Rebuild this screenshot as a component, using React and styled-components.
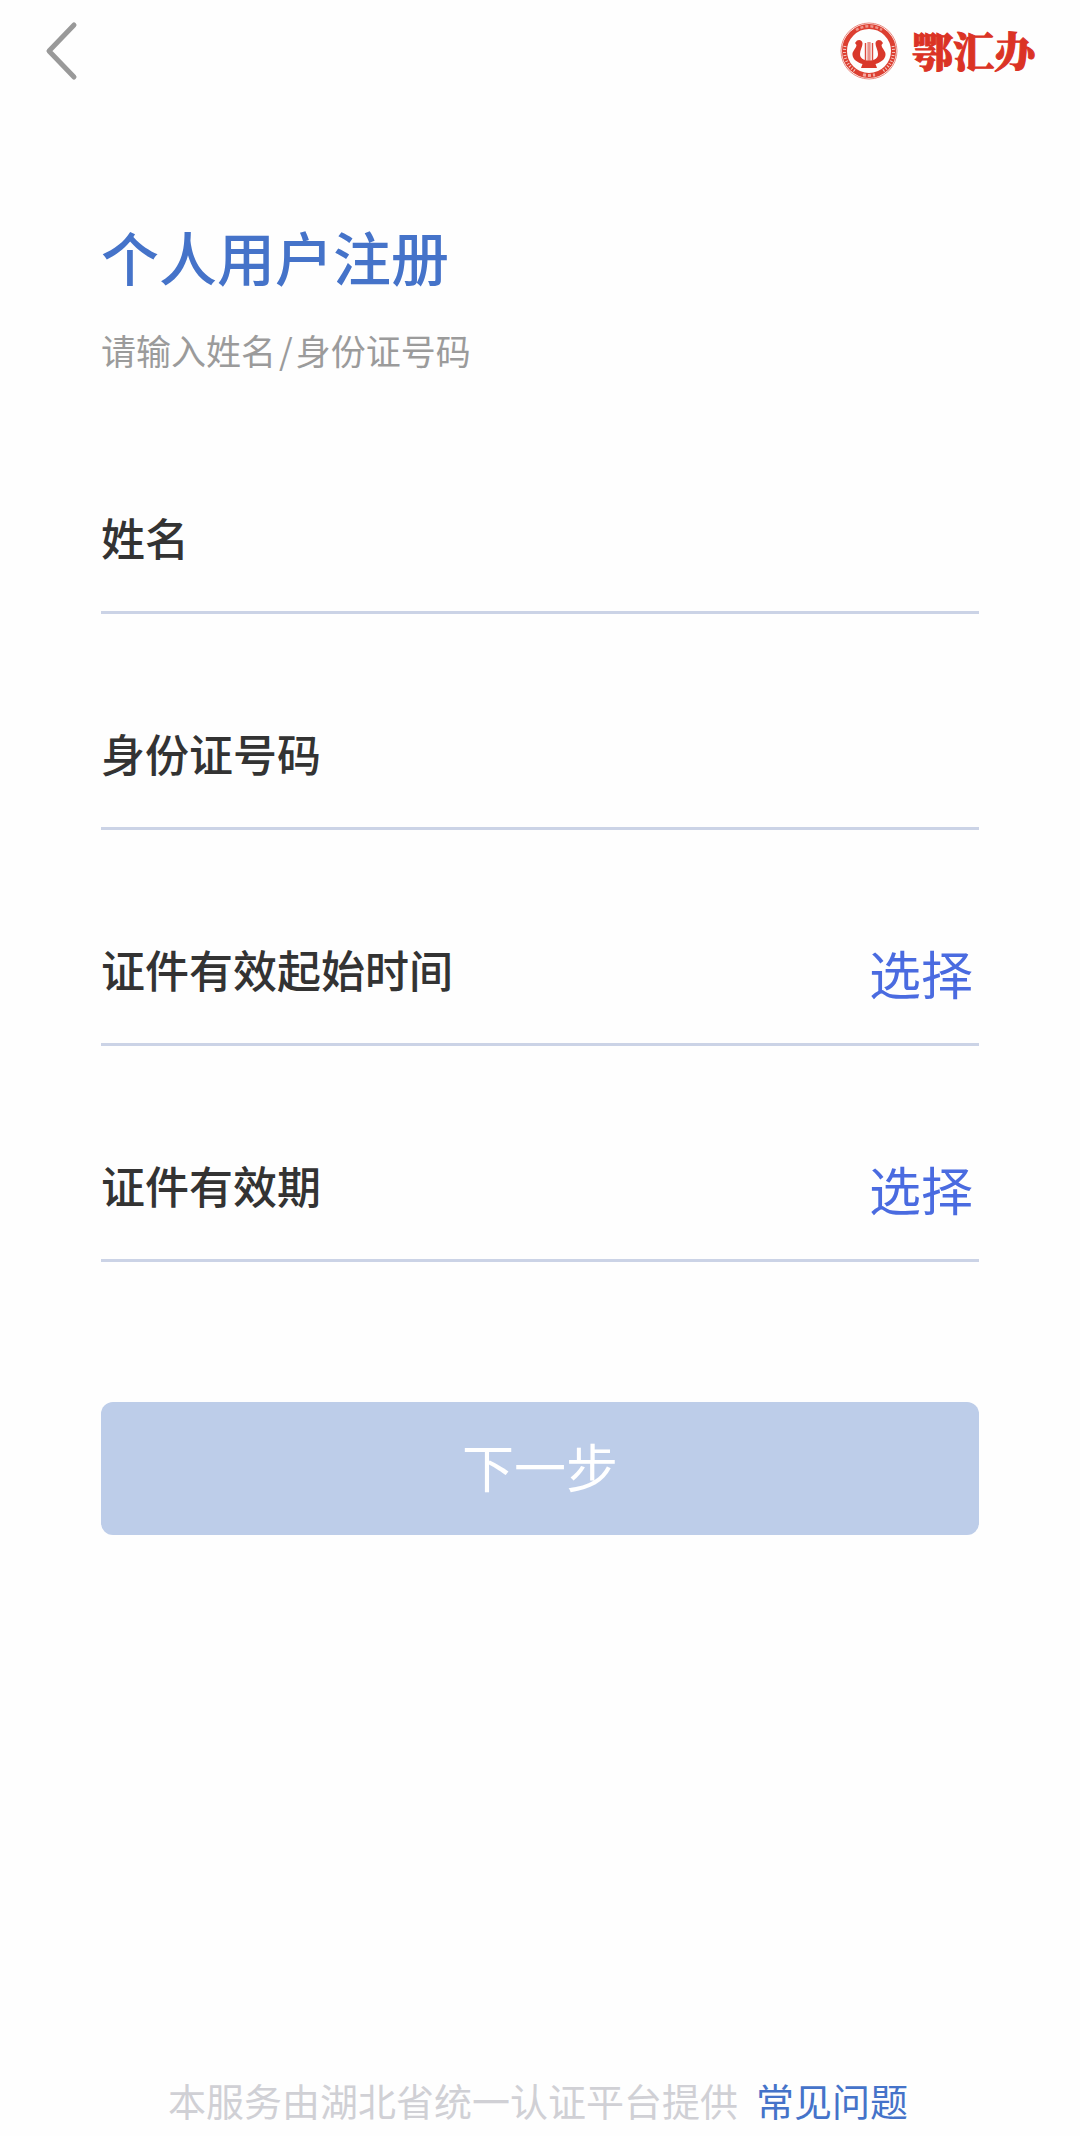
import React, { useState } from 'react';
import styled, { createGlobalStyle } from 'styled-components';

const GlobalStyle = createGlobalStyle`
  * {
    box-sizing: border-box;
  }

  body {
    margin: 0;
    background-color: #fefefe;
    font-family: "Noto Sans CJK SC", "Noto Sans", sans-serif;
  }

  button, input {
    font-family: inherit;
  }
`;

const Page = styled.div`
  display: flex;
  flex-direction: column;
  min-height: 100vh;
`;

const Header = styled.header`
  display: flex;
  justify-content: space-between;
  align-items: center;
  height: 102px;
  padding: 0 45px 0 44px;
`;

const BackButton = styled.button`
  display: flex;
  padding: 0;
  border: none;
  background: none;
  cursor: pointer;
`;

const Brand = styled.div`
  display: flex;
  align-items: center;
  gap: 14px;
`;

const BrandName = styled.span`
  padding-bottom: 2px;
  font-family: "Noto Serif CJK SC", "Noto Sans CJK SC", serif;
  font-size: 41px;
  font-weight: 900;
  line-height: 56px;
  color: #db3325;
  -webkit-text-stroke: 1px #db3325;
`;

const Main = styled.main`
  flex: 1;
  padding: 114px 101px 0;
`;

const Title = styled.h1`
  margin: 0;
  font-size: 58px;
  font-weight: 500;
  line-height: 80px;
  color: #4573c9;
`;

const Hint = styled.p`
  margin: 28px 0 0;
  font-size: 35px;
  line-height: 52px;
  color: #9b9b9b;
`;

const Slash = styled.span`
  margin: 0 3px;
`;

const Form = styled.form`
  margin-top: 22px;
`;

const Field = styled.div`
  display: flex;
  align-items: flex-end;
  gap: 24px;
  height: 216px;
  padding-bottom: 36px;
  border-bottom: 3px solid #cbd3e6;
`;

const Label = styled.label`
  flex: none;
  font-size: 44px;
  font-weight: 500;
  line-height: 76px;
  color: #333333;
`;

const Input = styled.input`
  flex: 1;
  min-width: 0;
  height: 76px;
  padding: 0;
  border: none;
  outline: none;
  background: none;
  font-size: 44px;
  color: #333333;
`;

const SelectButton = styled.button`
  margin-left: auto;
  padding: 0 6px;
  border: none;
  background: none;
  font-size: 52px;
  line-height: 68px;
  color: #4a6be0;
  cursor: pointer;
`;

const SubmitButton = styled.button`
  width: 100%;
  height: 133px;
  margin-top: 140px;
  padding: 0 0 6px;
  border: none;
  border-radius: 12px;
  background-color: #bdcde9;
  font-size: 52px;
  color: #ffffff;
`;

const Footer = styled.footer`
  display: flex;
  justify-content: center;
  gap: 18px;
  padding: 0 36px 8px 32px;
  font-size: 38px;
  line-height: 56px;
  color: #d0d0d5;
`;

const HelpLink = styled.a`
  color: #4573c9;
  text-decoration: none;
`;

const BackIcon = () => (
  <svg width="34" height="60" viewBox="0 0 34 60" fill="none" aria-hidden="true">
    <path
      d="M30 4 L5 30 L30 56"
      stroke="#999999"
      strokeWidth="5"
      strokeLinecap="round"
      strokeLinejoin="round"
    />
  </svg>
);

const Emblem = () => (
  <svg width="58" height="58" viewBox="0 0 58 58" fill="none" aria-hidden="true">
    <circle cx="29" cy="29" r="28" stroke="#eb8a80" strokeWidth="1" />
    <circle cx="29" cy="29" r="24.5" stroke="#dc3f31" strokeWidth="5" />
    {/* lettering dots and wheat ears on the ring */}
    <path d="M16 8 A24.5 24.5 0 0 1 42 8" stroke="#ef968c" strokeWidth="2.5" strokeDasharray="3 2" />
    <path d="M23 52.7 A24.5 24.5 0 0 0 35 52.7" stroke="#f3aaa2" strokeWidth="3" strokeDasharray="3 2" />
    <path d="M5 24 A24.5 24.5 0 0 0 15 49" stroke="#f8cfca" strokeWidth="3" strokeDasharray="1 2" />
    <path d="M53 24 A24.5 24.5 0 0 1 43 49" stroke="#f8cfca" strokeWidth="3" strokeDasharray="1 2" />
    {/* lyre */}
    <path
      d="M15 21 L17 18.5 C19.5 17 22.5 18.5 22.5 21.5 C22.5 25 20 28 20 32 C20 36 23 38.500 29 38.500 C35 38.500 38 36 38 32 C38 28 35.500 25 35.500 21.500 C35.500 18.500 38.500 17 41 18.500 L43 21 L41.500 23 C42 27 46 29 45.500 33 C45 38 40 40.500 35.500 42 L37 46 L21 46 L22.500 42 C18 40.500 13 38 12.500 33 C12 29 16 27 16.500 23 Z"
      fill="#d9382b"
    />
    <path d="M25.5 21 V39 M32.5 21 V39" stroke="#dc4b3f" strokeWidth="1.4" />
    <path d="M28.1 20 V39 M29.9 20 V39" stroke="#dc4b3f" strokeWidth="1" />
  </svg>
);

const fields = [
  { id: 'name', label: '姓名' },
  { id: 'idNumber', label: '身份证号码' },
  { id: 'validFrom', label: '证件有效起始时间', select: true },
  { id: 'validUntil', label: '证件有效期', select: true },
];

const App = () => {
  const [values, setValues] = useState({ name: '', idNumber: '' });

  const handleChange = (e) => {
    setValues({ ...values, [e.target.id]: e.target.value });
  };

  const handleSubmit = (e) => {
    e.preventDefault();
  };

  return (
    <Page>
      <GlobalStyle />
      <Header>
        <BackButton type="button" aria-label="返回">
          <BackIcon />
        </BackButton>
        <Brand>
          <Emblem />
          <BrandName>鄂汇办</BrandName>
        </Brand>
      </Header>
      <Main>
        <Title>个人用户注册</Title>
        <Hint>请输入姓名<Slash>/</Slash>身份证号码</Hint>
        <Form onSubmit={handleSubmit}>
          {fields.map(({ id, label, select }) => (
            <Field key={id}>
              <Label htmlFor={id}>{label}</Label>
              {select ? (
                <SelectButton type="button" id={id}>选择</SelectButton>
              ) : (
                <Input id={id} type="text" value={values[id]} onChange={handleChange} />
              )}
            </Field>
          ))}
          <SubmitButton type="submit">下一步</SubmitButton>
        </Form>
      </Main>
      <Footer>
        <span>本服务由湖北省统一认证平台提供</span>
        <HelpLink href="#faq">常见问题</HelpLink>
      </Footer>
    </Page>
  );
};

export default App;
